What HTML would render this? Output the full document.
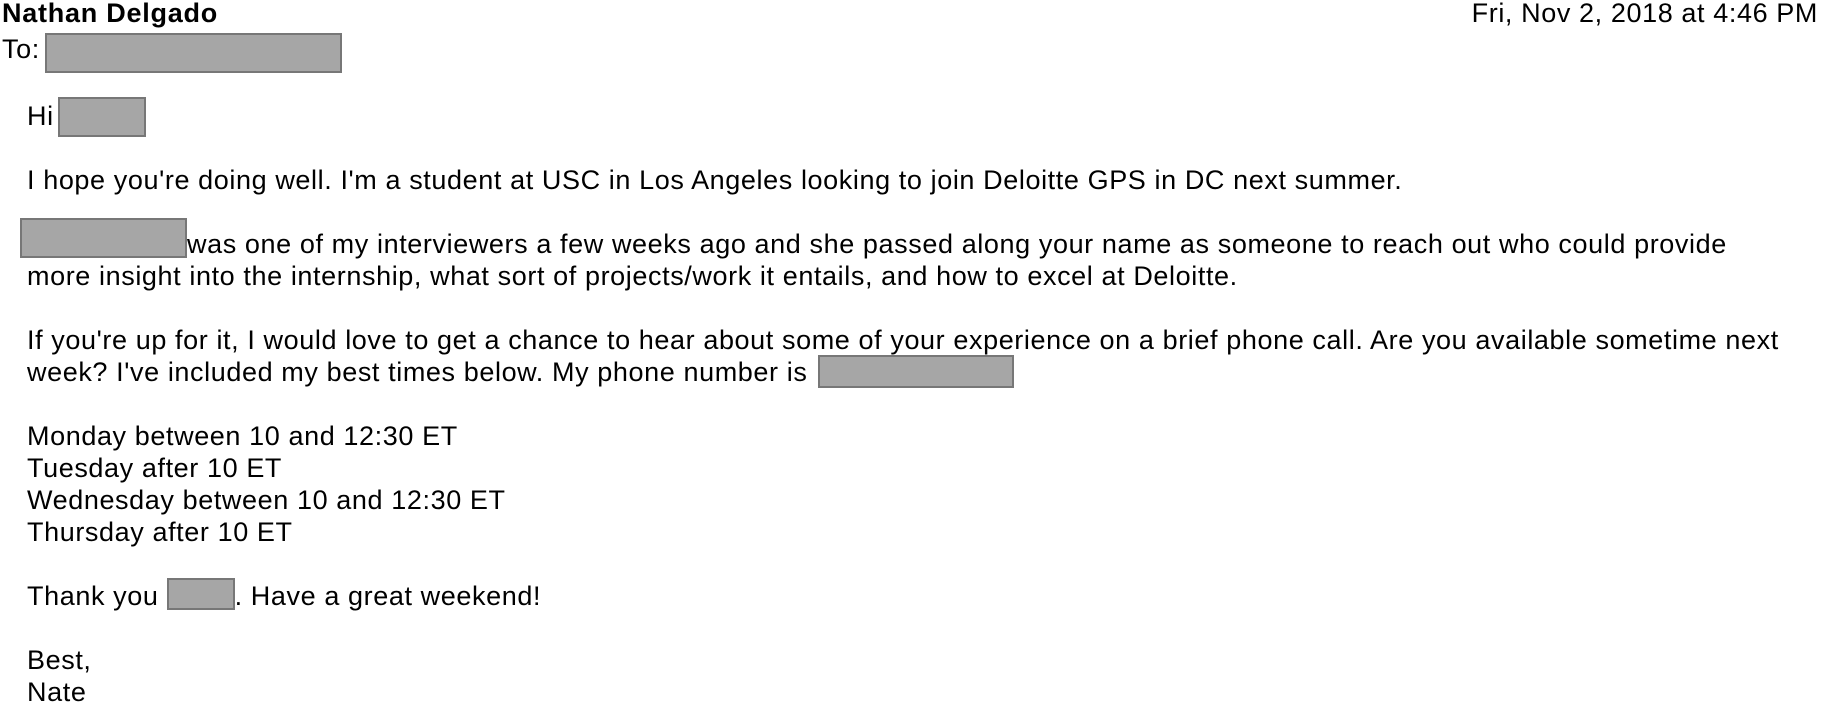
<!DOCTYPE html>
<html><head><meta charset="utf-8"><style>
html,body{margin:0;padding:0;background:#fff;width:1826px;height:706px;overflow:hidden}
body{font-family:"Liberation Sans",Arial,sans-serif;color:#000;font-size:27px;letter-spacing:0.6px;position:relative}
.r{display:inline-block;position:relative;height:0;vertical-align:baseline}
.r i{position:absolute;left:0;right:0;box-sizing:border-box;background:#a6a6a6;border:2px solid #777}
#name{position:absolute;left:2px;top:-3px;font-weight:bold;line-height:32px;white-space:nowrap;letter-spacing:0.75px}
#date{position:absolute;right:8px;top:-3px;line-height:32px;white-space:nowrap}
#to{position:absolute;left:2px;top:33px;line-height:32px;white-space:nowrap}
#tobox{position:absolute;left:45px;top:33px;width:297px;height:40px;box-sizing:border-box;background:#a6a6a6;border:2px solid #777}
#body{position:absolute;left:27px;top:100px;line-height:32px;white-space:nowrap}
</style></head><body>
<div id="name">Nathan Delgado</div>
<div id="date">Fri, Nov 2, 2018 at 4:46 PM</div>
<div id="to">To:</div>
<div id="tobox"></div>
<div id="body">
Hi <span class="r" style="width:88px;margin-left:-4px"><i style="top:-28px;height:40px"></i></span><br>
<br>
I hope you're doing well. I'm a student at USC in Los Angeles looking to join Deloitte GPS in DC next summer.<br>
<br>
<span class="r" style="width:167px;margin-left:-7px"><i style="top:-35px;height:40px"></i></span>was one of my interviewers a few weeks ago and she passed along your name as someone to reach out who could provide<br>
more insight into the internship, what sort of projects/work it entails, and how to excel at Deloitte.<br>
<br>
If you're up for it, I would love to get a chance to hear about some of your experience on a brief phone call. Are you available sometime next<br>
week? I've included my best times below. My phone number is <span class="r" style="width:196px;margin-left:2px"><i style="top:-26px;height:33px"></i></span><br>
<br>
Monday between 10 and 12:30 ET<br>
Tuesday after 10 ET<br>
Wednesday between 10 and 12:30 ET<br>
Thursday after 10 ET<br>
<br>
Thank you <span class="r" style="width:68px"><i style="top:-27px;height:32px"></i></span>. Have a great weekend!<br>
<br>
Best,<br>
Nate
</div>
</body></html>
